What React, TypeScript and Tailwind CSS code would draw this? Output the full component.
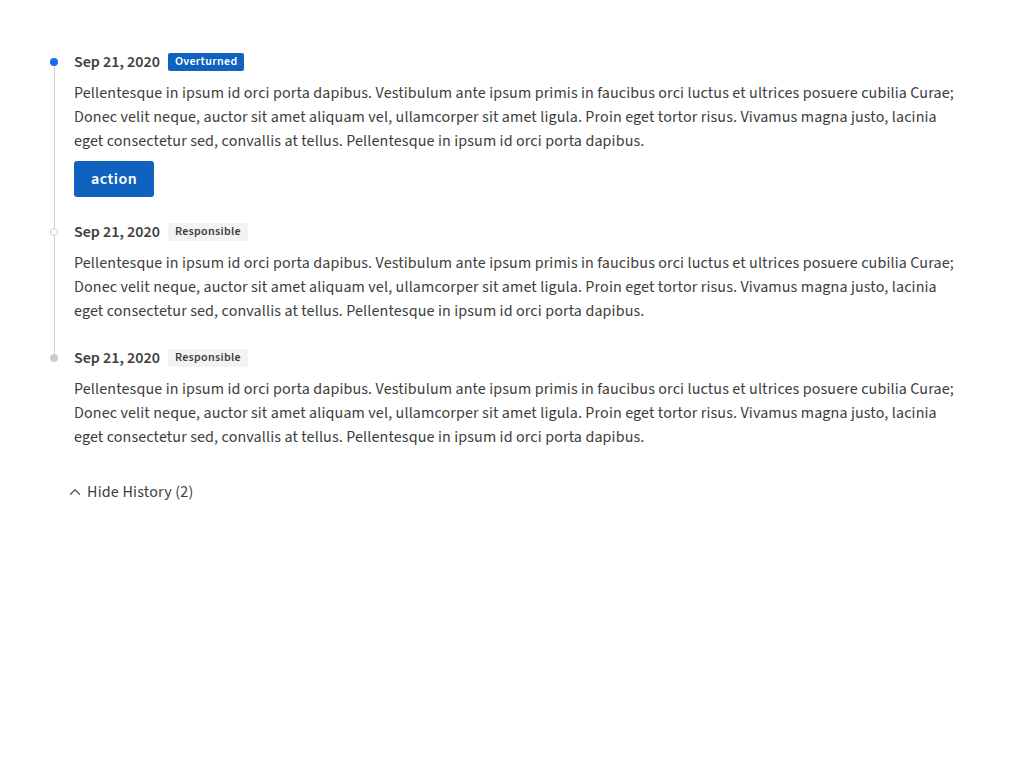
import React from 'react';
import { ChevronUp } from 'lucide-react';

const TEXT =
  'Pellentesque in ipsum id orci porta dapibus. Vestibulum ante ipsum primis in faucibus orci luctus et ultrices posuere cubilia Curae; Donec velit neque, auctor sit amet aliquam vel, ullamcorper sit amet ligula. Proin eget tortor risus. Vivamus magna justo, lacinia eget consectetur sed, convallis at tellus. Pellentesque in ipsum id orci porta dapibus.';

type Item = {
  date: string;
  status: string;
  active?: boolean;
  dot: 'active' | 'hollow' | 'filled';
  action?: boolean;
};

const items: Item[] = [
  { date: 'Sep 21, 2020', status: 'Overturned', active: true, dot: 'active', action: true },
  { date: 'Sep 21, 2020', status: 'Responsible', dot: 'hollow' },
  { date: 'Sep 21, 2020', status: 'Responsible', dot: 'filled' },
];

const Dot: React.FC<{ kind: Item['dot'] }> = ({ kind }) => {
  if (kind === 'active') return <span className="block w-2 h-2 rounded-full bg-[#1a6cf0]" />;
  if (kind === 'hollow') return <span className="block w-2 h-2 rounded-full bg-white border border-[#d0d0d0]" />;
  return <span className="block w-2 h-2 rounded-full bg-[#cccccc]" />;
};

const TimelineItem: React.FC<{ item: Item; last: boolean }> = ({ item, last }) => (
  <div className="flex">
    {/* rail */}
    <div className="relative w-[20px] shrink-0 flex justify-center">
      {!last && <span className="absolute left-[9.5px] top-[9px] bottom-[-9px] w-px bg-[#d0d0d0]" />}
      <span className="relative mt-[5px]"><Dot kind={item.dot} /></span>
    </div>
    <div className={`pl-[10px] ${last ? '' : 'pb-[26px]'}`}>
      <div className="flex items-center gap-2 h-[18px]">
        <span className="text-[16px] font-semibold text-[#3d3d3d] leading-none">{item.date}</span>
        {item.active ? (
          <span className="h-[18px] px-[7px] flex items-center rounded-[2px] bg-[#0f62bd] text-white text-[12px] font-semibold tracking-[0.3px] leading-none">
            {item.status}
          </span>
        ) : (
          <span className="h-[18px] px-[7px] flex items-center rounded-[2px] bg-[#f3f3f3] text-[#3d3d3d] text-[12px] font-semibold tracking-[0.3px] leading-none">
            {item.status}
          </span>
        )}
      </div>
      <p className="mt-[10px] text-[16px] leading-[24px] tracking-[0.13px] text-[#3d3d3d] max-w-[890px]">{TEXT}</p>
      {item.action && (
        <button className="mt-[8px] h-[36px] px-[17px] rounded-[3px] bg-[#0f62bd] text-white text-[16px] font-semibold tracking-[0.5px]">
          action
        </button>
      )}
    </div>
  </div>
);

export default function App() {
  return (
    <div
      className="min-h-screen bg-white pt-[53px] pl-[44px] pr-[40px]"
      style={{ fontFamily: '"Source Sans Pro", "Source Sans 3", "Liberation Sans", sans-serif' }}
    >
      {items.map((it, i) => (
        <TimelineItem key={i} item={it} last={i === items.length - 1} />
      ))}
      <button className="mt-[31px] ml-[22px] flex items-center gap-[3px] text-[16px] tracking-[0.2px] text-[#3d3d3d]">
        <ChevronUp className="w-[18px] h-[18px] text-[#555]" strokeWidth={1.75} />
        Hide History (2)
      </button>
    </div>
  );
}
